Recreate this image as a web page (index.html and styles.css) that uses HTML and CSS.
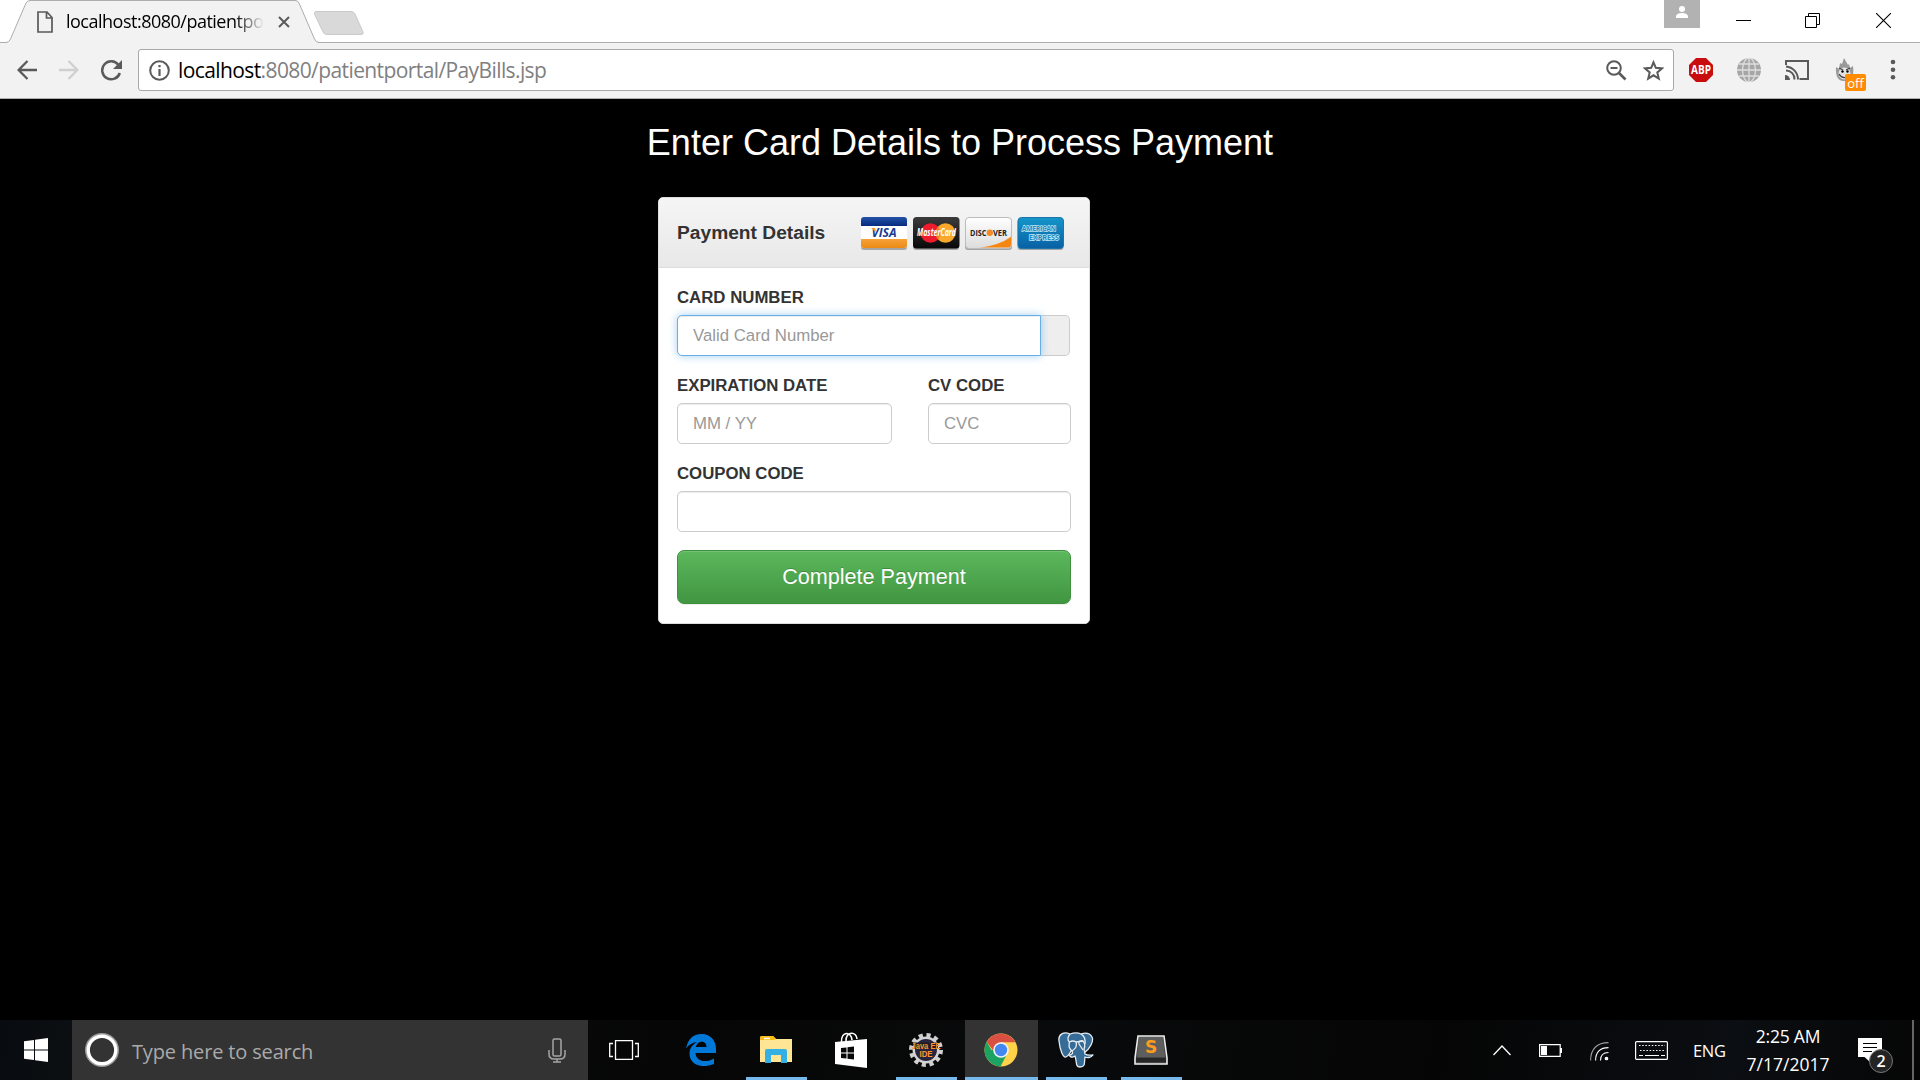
FILE: index.html
```html
<!DOCTYPE html>
<html lang="en">
<head>
<meta charset="utf-8">
<title>Pay Bills</title>
<link rel="stylesheet" href="styles.css">
</head>
<body>
<div class="screen">
  <header class="tabstrip">
    <div class="tab">
      <svg class="tab-shape" width="374" height="43" viewBox="0 0 374 43"><path d="M0 42.5H6Q9 42.5 10.500 39L26 3Q27.500.5 30 .5H295Q298 .5 299 3L314.500 39Q316 42.500 319 42.500V43H0Z" fill="#f2f2f2"/><path d="M0 42.500H6Q9 42.500 10.500 39L26 3Q27.500.5 30 .5H295Q298 .5 299 3L314.500 39Q316 42.500 319 42.500H374" fill="none" stroke="#adadad"/><path d="M316 11.500H351Q354 11.500 355 14L363 32Q364 34.500 361 34.500H327Q324 34.500 323 32L314.500 14Q314 11.500 316 11.500Z" fill="#d9d9d9" stroke="#cacaca"/></svg>
      <div class="tab-content">
        <svg width="16" height="22" viewBox="0 0 16 22" fill="none" stroke="#5a5a5a" stroke-width="1.7"><path d="M1 1H10L15 6.500V21H1Z M9.500 1V7H15"/></svg>
        <span class="tab-title">localhost:8080/patientpo</span>
        <svg width="12" height="12" viewBox="0 0 12 12" stroke="#5a5a5a" stroke-width="2"><path d="M1 1L11 11M11 1L1 11"/></svg>
      </div>
    </div>
    <div class="window-controls">
      <div class="profile"><svg width="12" height="12" viewBox="0 0 12 12" fill="#fff"><circle cx="6" cy="3" r="3"/><path d="M0 12V10Q1 7 6 7T12 10V12Z"/></svg></div>
      <svg class="minimize" width="15" height="15" viewBox="0 0 15 15" stroke="#000"><path d="M0 7.500H15"/></svg>
      <svg class="restore" width="15" height="15" viewBox="0 0 15 15" fill="none" stroke="#000"><path d="M.5 3.500H11.500V14.500H.5ZM3.500 3.500V.5H14.500V11.500H11.500"/></svg>
      <svg width="15" height="15" viewBox="0 0 15 15" stroke="#000" stroke-width="1.100"><path d="M0 0L15 15M15 0L0 15"/></svg>
    </div>
  </header>
  <nav class="toolbar">
    <svg class="nav-icon" width="20" height="20" viewBox="0 0 20 20" fill="none" stroke="#5a5a5a" stroke-width="2.300"><path d="M10.500 1L1.600 10L10.500 19M2 10H20"/></svg>
    <svg class="nav-icon" width="20" height="20" viewBox="0 0 20 20" fill="none" stroke="#d0d0d0" stroke-width="2.300"><path d="M9.500 1L18.400 10L9.500 19M18 10H0"/></svg>
    <svg class="nav-icon" width="21" height="21" viewBox="0 0 21 21"><path d="M17.500 5A9 9 0 1 0 18.800 13" fill="none" stroke="#5a5a5a" stroke-width="2.500"/><path d="M21 0V9H12Z" fill="#5a5a5a"/></svg>
    <div class="omnibox">
      <svg width="21" height="21" viewBox="0 0 21 21"><circle cx="10.500" cy="10.500" r="9.300" fill="none" stroke="#5a5a5a" stroke-width="2"/><path d="M9.400 5H11.600V7.300H9.400ZM9.400 9H11.600V16H9.400Z" fill="#5a5a5a"/></svg>
      <span class="url"><b>localhost</b>:8080/patientportal/PayBills.jsp</span>
      <svg class="magnifier" width="21" height="21" viewBox="0 0 21 21" fill="none" stroke="#5a5a5a" stroke-width="2"><circle cx="8" cy="8" r="6.800"/><path d="M4.500 8H11.500"/><path d="M13 13L19.500 19.500" stroke-width="2.600"/></svg>
      <svg width="21" height="21" viewBox="0 0 21 21" fill="none" stroke="#5a5a5a" stroke-width="2"><path d="M10.500 2.300L12.800 7.800L19 8.400L14.300 12.400L15.800 18.600L10.500 15.300L5.200 18.600L6.700 12.400L2 8.400L8.200 7.800Z"/></svg>
    </div>
    <div class="extensions">
      <svg width="24" height="24" viewBox="0 0 24 24"><path d="M7 0H17L24 7V17L17 24H7L0 17V7Z" fill="#c70d0d"/><text class="abp" x="12" y="16.300" text-anchor="middle" textLength="20" lengthAdjust="spacingAndGlyphs">ABP</text></svg>
      <svg width="24" height="24" viewBox="0 0 24 24"><circle cx="12" cy="12" r="12" fill="#a6a6a6"/><g fill="none" stroke="#dedede" stroke-width="1.300"><ellipse cx="12" cy="12" rx="6.500" ry="12"/><path d="M12 0V24M0 12H24M2 6H22M2 18H22"/></g></svg>
      <svg width="24" height="24" viewBox="0 0 24 24" fill="none" stroke="#5a5a5a" stroke-width="2"><path d="M1 7V3H23V21H14.500M1 12.500A8.500 8.500 0 0 1 9.500 21.500M1 8.500A13 13 0 0 1 13 21.500"/><path d="M0 17A5 5 0 0 1 5 22H0Z" fill="#5a5a5a" stroke="none"/></svg>
      <div class="hola">
        <svg width="20" height="24" viewBox="0 0 20 24"><path d="M1 9L4 11L5 5L7 6L9 0L13 7L14 6L15 10L18 8Q20 22 10 23T1 9Z" fill="#999"/><ellipse cx="9.500" cy="15.500" rx="6" ry="6" fill="#e4e4e4"/><path d="M4 10L8 12M15 10L11 12M4 16Q7 21 12 19" stroke="#444" fill="none" stroke-width="1.300"/><circle cx="7.500" cy="13.500" r="1.200"/><circle cx="12.500" cy="13.500" r="1.200"/></svg>
        <span class="hola-badge">off</span>
      </div>
      <svg class="menu" width="6" height="22" viewBox="0 0 6 22" fill="#5a5a5a"><circle cx="3" cy="3" r="2.300"/><circle cx="3" cy="10.700" r="2.300"/><circle cx="3" cy="18.300" r="2.300"/></svg>
    </div>
  </nav>

  <main class="page">
    <h1 class="heading">Enter Card Details to Process Payment</h1>
    <form class="panel">
      <div class="panel-head">
        <h2 class="panel-title">Payment Details</h2>
        <svg class="cards" width="206" height="36" viewBox="0 0 206 36">
          <defs>
            <linearGradient id="blue" x2="0" y2="1"><stop stop-color="#2452a8"/><stop offset="1" stop-color="#062b80"/></linearGradient>
            <linearGradient id="gold" x2="0" y2="1"><stop stop-color="#f8a239"/><stop offset="1" stop-color="#e98a16"/></linearGradient>
            <linearGradient id="dark" x2="0" y2="1"><stop stop-color="#3b3b3b"/><stop offset="1" stop-color="#080808"/></linearGradient>
            <linearGradient id="pale" x2="0" y2="1"><stop stop-color="#fff"/><stop offset="1" stop-color="#dcdcdc"/></linearGradient>
            <linearGradient id="amex" x2="0" y2="1"><stop stop-color="#1595ca"/><stop offset="1" stop-color="#0860a4"/></linearGradient>
            <clipPath id="visaClip"><rect x="1" y="1" width="46" height="31" rx="3"/></clipPath>
            <clipPath id="discClip"><rect x="106" y="1.500" width="45" height="30" rx="3"/></clipPath>
          </defs>
          <g fill="#777" opacity=".6"><rect x="1" y="3" width="46" height="31" rx="3"/><rect x="53" y="3" width="46" height="31" rx="3"/><rect x="105" y="3" width="47" height="31" rx="3"/><rect x="157.500" y="3" width="46" height="31" rx="3"/></g>
          <g clip-path="url(#visaClip)"><path fill="#fff" d="M1 1H47V32H1Z"/><path fill="url(#blue)" d="M1 1H47V10H1Z"/><path fill="url(#gold)" d="M1 23H47V32H1Z"/></g>
          <text class="visa" x="24" y="20.500" text-anchor="middle" textLength="25" lengthAdjust="spacingAndGlyphs">VISA</text>
          <path d="M11 12H15L16 16Z" fill="#f39a25"/>
          <rect x="53" y="1" width="46.500" height="31.500" rx="3.500" fill="url(#dark)"/>
          <circle cx="70.500" cy="17" r="9.800" fill="#ec1b2e"/><circle cx="85.500" cy="17" r="9.800" fill="#f9a82c"/><path d="M78 10.700A9.800 9.800 0 0 0 78 23.300A9.800 9.800 0 0 0 78 10.700Z" fill="#f37a28"/>
          <text class="mastercard" x="76.500" y="20.300" text-anchor="middle" textLength="39" lengthAdjust="spacingAndGlyphs">MasterCard</text>
          <rect x="105.500" y="1.500" width="46" height="31" rx="3.500" fill="url(#pale)" stroke="#bcbcbc"/>
          <path clip-path="url(#discClip)" d="M119 32Q141 29 152 20V32Z" fill="#f68612"/>
          <text class="discover" x="110" y="19.800" textLength="16.500" lengthAdjust="spacingAndGlyphs">DISC</text><circle cx="129.800" cy="16.700" r="3.200" fill="#f58a22"/><text class="discover" x="133" y="19.800" textLength="14" lengthAdjust="spacingAndGlyphs">VER</text>
          <rect x="158" y="1.500" width="45.500" height="31" rx="3.500" fill="url(#amex)" stroke="#1a76ab"/>
          <text class="amex" x="162" y="15.300" textLength="34" lengthAdjust="spacingAndGlyphs">AMERICAN</text><text class="amex" x="169" y="23.800" textLength="30" lengthAdjust="spacingAndGlyphs">EXPRESS</text>
        </svg>
      </div>
      <div class="panel-body">
        <label class="field"><span class="label">CARD NUMBER</span>
          <span class="input-group"><input class="control focused" placeholder="Valid Card Number"><span class="addon"></span></span>
        </label>
        <div class="field-row">
          <label class="field expiry"><span class="label">EXPIRATION DATE</span><input class="control" placeholder="MM / YY"></label>
          <label class="field"><span class="label">CV CODE</span><input class="control" placeholder="CVC"></label>
        </div>
        <label class="field"><span class="label">COUPON CODE</span><input class="control"></label>
        <button class="submit" type="button">Complete Payment</button>
      </div>
    </form>
  </main>

  <footer class="taskbar">
    <div class="start"><svg width="24" height="24" viewBox="0 0 24 24" fill="#fff"><path d="M0 3.300L10 2V11.500H0ZM11 1.800L24 0V11.500H11ZM0 12.500H10V22L0 20.700ZM11 12.500H24V24L11 22.200Z"/></svg></div>
    <div class="search">
      <svg width="34" height="34" viewBox="0 0 34 34" fill="none"><circle cx="17" cy="17" r="16" stroke="#9a9a9a" stroke-width="2"/><circle cx="17" cy="17" r="13.800" stroke="#fff" stroke-width="3.400"/></svg>
      <span class="search-text">Type here to search</span>
      <svg width="18" height="25" viewBox="0 0 18 25" fill="none" stroke="#a5a5a5" stroke-width="1.500"><rect x="5" y="1" width="8" height="17" rx="1.500"/><path d="M1 12V16Q1 21 6 21H12Q17 21 17 16V12M9 21V24M5 24H13"/></svg>
    </div>
    <div class="taskview"><svg width="30" height="20" viewBox="0 0 30 20" fill="none" stroke="#fff" stroke-width="1.300"><path d="M6.500.7H23.500V19.300H6.500ZM4 3.500H.7V16.500H4M26 3.500H29.300V16.500H26"/></svg></div>
    <div class="app"><svg width="30" height="32" viewBox="0 0 30 32"><path d="M0 14.500C2 5 7 0 15.500 0C25 0 30 7 30 15V19H9.500C10 28 21 29 28 24.500V30C16 35 3.500 31 3.500 19.500C3.500 14.500 6.500 10.500 11 8C6 8.800 2.500 11 0 14.500ZM9.800 13H20.500C20.500 6 11.500 6 9.800 13Z" fill="#0078d7"/></svg></div>
    <div class="app running"><svg width="32" height="28" viewBox="0 0 32 28"><path d="M0 2Q0 0 2 0H13L16 3H32V26H0Z" fill="#ffe594"/><path d="M0 4V2Q0 0 2 0H13L16 3L14 4Z" fill="#f9bd16"/><path d="M4 2.500H10" stroke="#fff" stroke-width="1.500"/><path d="M5 27V15Q5 13 7 13H25Q27 13 27 15V27H21V19H11V27Z" fill="#35b0e5"/></svg></div>
    <div class="app"><svg width="32" height="36" viewBox="0 0 32 36"><path d="M6.500 10C6-1 16.500-1 17 8M11 9C11-1 21.500-1 22 7" fill="none" stroke="#fff" stroke-width="1.600"/><path d="M0 10L32 7V36L0 32Z" fill="#fff"/><path d="M6 16L11.500 15.400V20.500H6ZM12.500 15.300L19 14.500V20.500H12.500ZM6 21.500H11.500V26.600L6 26ZM12.500 21.500H19V27.400L12.500 26.700Z" fill="#080808"/></svg></div>
    <div class="app running"><svg width="36" height="34" viewBox="0 0 36 34"><circle cx="18" cy="17" r="14.800" fill="none" stroke="#d0d0d0" stroke-width="4.400" stroke-dasharray="4.100 3.650"/><circle cx="18" cy="17" r="12.200" fill="#29243d" stroke="#d2d2d2" stroke-width="2.500"/><path d="M6 9.500H30V16H6Z" fill="#241c22"/><text class="gear-label" x="3.500" y="15.700" textLength="29" lengthAdjust="spacingAndGlyphs">Java EE</text><text class="gear-label" x="11.500" y="23.700" textLength="13" lengthAdjust="spacingAndGlyphs">IDE</text></svg></div>
    <div class="app running active"><svg width="34" height="34" viewBox="0 0 34 34"><circle cx="17" cy="17" r="16.500" fill="#ffd24a"/><path d="M2.700 8.700A16.500 16.500 0 0 1 31.300 9.300H17L9.500 18Z" fill="#d95043"/><path d="M2.700 8.700A16.500 16.500 0 0 0 16.500 33.500L23 21L17 17H7.500Z" fill="#1da261"/><circle cx="17" cy="17" r="7.800" fill="#f3f3f3"/><circle cx="17" cy="17" r="6.200" fill="#4587f0"/></svg></div>
    <div class="app running"><svg width="36" height="36" viewBox="0 0 36 36" fill="#356c98" stroke="#e6edf2" stroke-width="1.300" stroke-linejoin="round"><path d="M12 2C5-1 0 3 1 9C2 18 5 26 8 25C11 24 12 20 14 18L22 18L26 21C32 17 36 9 34 5C31 0 26 1 23 2C20 .5 16 .5 12 2Z"/><path d="M11.500 10Q15 8 18 10L25 9Q28 12 26 17L27 22C30 24 33 23 35 23C33 26 29 26 27 25C26 30 28 35 22 35C17 35 19 29 17 24C14 26 12 25 11 23C14 23 16 21 13 18Q10 15 11.500 10Z"/><path d="M12 2Q8 7 11.500 10M23 2Q28 5 27 12M18 10Q20 15 14 19M25 9Q20 8 21 12L25 18" fill="none"/></svg></div>
    <div class="app running"><svg width="34" height="30" viewBox="0 0 34 30"><path d="M4 1H30L33 23V29H1V23Z" fill="#444" stroke="#ededed" stroke-width="1.600"/><path d="M5 2H29L31 22H3Z" fill="#5e5e5e"/><path d="M2 23H32V27H2Z" fill="#262626"/><text class="sublime" x="17" y="18" text-anchor="middle">S</text></svg></div>
    <div class="tray">
      <svg class="caret" width="18" height="11" viewBox="0 0 18 11" fill="none" stroke="#fff" stroke-width="1.300"><path d="M.5 10L9 1L17.500 10"/></svg>
      <svg class="battery" width="23" height="13" viewBox="0 0 23 13"><path d="M.6.6H21.200V12.400H.6Z" fill="none" stroke="#fff" stroke-width="1.200"/><path d="M2 2H8V11H2ZM21 4H23V9H21Z" fill="#fff"/></svg>
      <svg class="wifi" width="19" height="19" viewBox="0 0 19 19" fill="none" stroke="#fff" stroke-width="1.100"><path d="M.6 18.500C.6 7 7 .6 18.500.6" opacity=".6"/><path d="M5.600 18.500C5.600 10 10 5.600 18.500 5.600M10.500 18.500C10.500 13 13 10.500 18.500 10.500"/><circle cx="16.500" cy="16.500" r="1.300" fill="#fff"/></svg>
      <svg class="keyboard" width="33" height="19" viewBox="0 0 33 19" fill="none" stroke="#fff"><rect x=".6" y=".6" width="31.800" height="17.800" rx="1" stroke-width="1.200"/><path d="M4 4.500H30M5 9.500H29" stroke-dasharray="1.500 1.700"/><path d="M4 14.500H8M10 14.500H24M26 14.500H30"/></svg>
      <span class="lang">ENG</span>
      <div class="clock"><span>2:25 AM</span><span class="date">7/17/2017</span></div>
      <div class="notices"><svg width="24" height="24" viewBox="0 0 24 24"><path d="M0 0H24V19H12V24L6.500 19H0Z" fill="#fff"/><path d="M5 5.500H19M5 9.500H19M5 13.500H14" stroke="#000" stroke-width="1.200"/></svg><span class="notice-count">2</span></div>
      <div class="show-desktop"></div>
    </div>
  </footer>
</div>
</body>
</html>
```
FILE: styles.css
```css
* { box-sizing: border-box; }
body { margin: 0; background: #000; font-family: "Liberation Sans", Arial, sans-serif; }
svg { display: block; flex: none; }
.screen { width: 1920px; height: 1080px; display: flex; flex-direction: column; overflow: hidden; }

/* Browser window */
.tabstrip { height: 43px; background: linear-gradient(#adadad, #adadad) bottom / 100% 1px no-repeat #fff; display: flex; justify-content: space-between; }
.tab { width: 374px; height: 43px; display: grid; }
.tab-shape, .tab-content { grid-area: 1 / 1; }
.tab-content { display: flex; align-items: center; padding-left: 37px; z-index: 1; }
.tab-title { width: 198px; margin: -1px 14px 0 13px; overflow: hidden; white-space: nowrap; font: 18px/28px "Open Sans", sans-serif; letter-spacing: -.5px; -webkit-mask-image: linear-gradient(90deg, #000 85%, transparent); }
.window-controls { display: flex; align-items: flex-start; padding-right: 29px; }
.window-controls > svg { margin-top: 13px; }
.profile { width: 36px; height: 28px; background: #b2b2b2; display: flex; justify-content: center; padding-top: 6px; margin-right: 36px; }
.minimize { margin-right: 54px; }
.restore { margin-right: 56px; }
.toolbar { height: 56px; background: #f2f2f2; border-bottom: 1px solid #b0b0b0; display: flex; align-items: flex-start; padding: 6px 24px 0 17px; }
.nav-icon { margin: 11px 22px 0 0; }
.nav-icon + .nav-icon + .nav-icon { margin-right: 16px; }
.omnibox { width: 1536px; height: 42px; border: 1px solid #a9a9a9; border-radius: 3px; background: #fff; display: flex; align-items: center; padding: 0 9px 0 10px; }
.url { flex: 1; margin-left: 8px; font: 21px/28px "Open Sans", sans-serif; letter-spacing: -.6px; color: #808080; }
.url b { font-weight: 400; color: #000; }
.magnifier { margin-right: 16px; }
.extensions { flex: 1; display: flex; gap: 24px; align-items: flex-start; padding-top: 9px; margin-left: 15px; }
.abp { font: bold 12.500px "Open Sans", sans-serif; fill: #fff; }
.hola { position: relative; width: 24px; height: 24px; padding-left: 2px; }
.hola-badge { position: absolute; left: 12px; top: 16px; width: 21px; height: 17px; border-radius: 2px; background: #ff8c00; color: #fff; font: 13px/18px "Open Sans", sans-serif; text-align: center; }
.menu { margin: 1px 0 0 9px; }

/* Payment page */
.page { flex: 1; display: flex; flex-direction: column; }
.heading { margin: 24px 0 34px; text-align: center; color: #fff; font-size: 36px; font-weight: 400; line-height: 40px; }
.panel { width: 432px; height: 427px; margin: 0 0 0 658px; border: 1px solid #ddd; border-radius: 5px; background: #fff; overflow: hidden; }
.panel-head { height: 70px; padding: 0 23px 0 18px; display: flex; align-items: center; justify-content: space-between; background: linear-gradient(#f5f5f5, #e8e8e8); border-bottom: 1px solid #ddd; }
.cards { margin-top: 3px; }
.panel-title { margin: 0; font-size: 19.200px; line-height: 24px; color: #333; }
.visa { font: italic bold 12px "Open Sans", sans-serif; fill: #193c96; }
.mastercard { font: italic bold 10px "Open Sans", sans-serif; fill: #fff; }
.discover { font: bold 8.500px "Open Sans", sans-serif; fill: #222; }
.amex { font: bold 7.500px "Open Sans", sans-serif; fill: #2388bf; stroke: #bfe6f6; stroke-width: 1.400px; paint-order: stroke; }
.panel-body { padding: 19px 18px 0; }
.field { display: block; height: 88px; }
.label { display: block; height: 28px; font-size: 16.800px; font-weight: 700; line-height: 22px; color: #333; }
.field-row { display: grid; grid-template-columns: 215px 143px; justify-content: space-between; }
.control { display: block; width: 100%; height: 41px; padding: 0 15px; border: 1px solid #ccc; border-radius: 5px; background: #fff; box-shadow: inset 0 1px 1px rgba(0, 0, 0, .075); font: 16.800px "Liberation Sans", Arial, sans-serif; outline: none; }
.control::placeholder { color: #999; opacity: 1; }
.input-group { display: flex; }
.focused { width: 364px; border-color: #66afe9; border-radius: 5px 0 0 5px; box-shadow: inset 0 1px 1px rgba(0, 0, 0, .075), 0 0 9px rgba(102, 175, 233, .6); z-index: 1; }
.addon { width: 29px; height: 41px; background: #eee; border: 1px solid #ccc; border-left: 0; border-radius: 0 5px 5px 0; }
.submit { display: block; width: 394px; height: 54px; margin-top: -1px; padding: 0; border: 1px solid #3e8f3e; border-radius: 7px; background: linear-gradient(#5cb85c, #419641); box-shadow: inset 0 1px 0 rgba(255, 255, 255, .15), 0 1px 1px rgba(0, 0, 0, .075); color: #fff; font: 21.600px "Liberation Sans", Arial, sans-serif; text-shadow: 0 -1px 0 rgba(0, 0, 0, .2); }

/* Taskbar */
.taskbar { height: 60px; display: flex; background: linear-gradient(100deg, #080b0f, #0d1013 5%, #060606 35%, #090a0b 55%, #050505 75%, #0b0e12 90%, #060606); color: #fff; font-family: "Open Sans", sans-serif; }
.start, .taskview, .app { display: flex; align-items: center; justify-content: center; }
.start { width: 72px; }
.search { width: 516px; background: #333; display: flex; align-items: center; padding: 0 22px 0 13px; }
.search-text { flex: 1; margin: 2px 0 0 13px; font-size: 20px; letter-spacing: -.15px; color: #aaa; }
.taskview { width: 76px; padding-right: 4px; }
.app { width: 75px; padding-right: 2px; }
.running { background: linear-gradient(#76b9ed, #76b9ed) 50% 100% / 61px 3px no-repeat; }
.active { width: 73px; margin: 0 1px; background: linear-gradient(#76b9ed, #76b9ed) bottom / 100% 3px no-repeat #333; }
.gear-label { font: bold 8.500px "Liberation Sans", sans-serif; fill: #ff9431; }
.sublime { font: bold 17px "DejaVu Sans", sans-serif; fill: #ff9c20; }
.tray { flex: 1; display: flex; align-items: center; justify-content: flex-end; }
.caret { margin-right: 28px; }
.battery { margin-right: 28px; }
.wifi { margin: 2px 26px 0 0; }
.keyboard { margin-right: 25px; }
.lang { width: 53px; font-size: 16.500px; letter-spacing: -.3px; }
.clock { width: 84px; display: flex; flex-direction: column; align-items: center; font-size: 17.500px; line-height: 28px; letter-spacing: -.2px; margin: -1px 28px 0 0; }
.date { letter-spacing: 0; }
.notices { position: relative; width: 54px; }
.notice-count { position: absolute; left: 11px; top: 11px; width: 24px; height: 24px; border: 1px solid #777; border-radius: 50%; background: #242424; font-size: 16px; font-weight: 600; line-height: 22px; text-align: center; }
.show-desktop { width: 8px; height: 60px; border-left: 2px solid #666; }
```
